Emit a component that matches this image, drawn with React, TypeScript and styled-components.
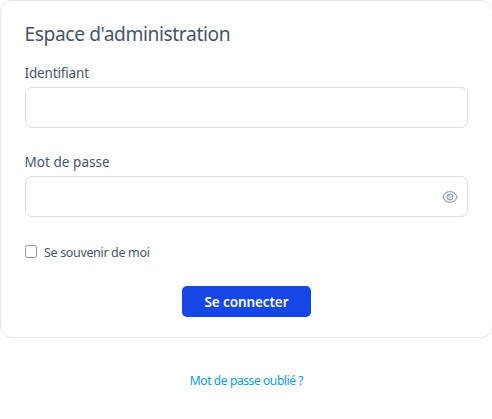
import React from "react";
import styled, { createGlobalStyle } from "styled-components";

const GlobalStyle = createGlobalStyle`
  * { box-sizing: border-box; }
  body {
    margin: 0;
    background: #fff;
    overflow: hidden;
    font-family: "Noto Sans", "Open Sans", sans-serif;
    color: #475569;
  }
`;

const Page = styled.main`
  width: 493px;
  display: flex;
  flex-direction: column;
  align-items: center;
`;

const Card = styled.form`
  width: 493px;
  height: 338px;
  padding: 18px 24px 0;
  border: 1px solid #e2e8f0;
  border-radius: 12px;
  display: flex;
  flex-direction: column;
`;

const Title = styled.h1`
  margin: 0 0 15px -0.5px;
  font-size: 19.2px;
  line-height: 30px;
  font-weight: 400;
  letter-spacing: -0.4px;
  white-space: nowrap;
`;

const Field = styled.div`
  display: flex;
  flex-direction: column;
  margin-bottom: 25px;
`;

const Label = styled.label<{ $spacing: number }>`
  height: 23px;
  margin-left: -0.5px;
  font-size: 13.5px;
  line-height: 19px;
  letter-spacing: ${(p) => p.$spacing}px;
`;

const InputBox = styled.div`
  display: flex;
  align-items: center;
  height: 41px;
  padding: 0 9px;
  border: 1px solid #dbdeea;
  border-radius: 7px;
`;

const Input = styled.input`
  flex: 1;
  min-width: 0;
  border: 0;
  outline: 0;
  background: transparent;
  font: inherit;
  color: inherit;
`;

const Toggle = styled.button`
  display: flex;
  padding: 0;
  border: 0;
  background: none;
  color: #a0abba;
`;

const Remember = styled.label`
  display: flex;
  align-items: center;
  gap: 7px;
  height: 19px;
  font-size: 12.5px;
  letter-spacing: -0.34px;
`;

const RememberText = styled.span`
  padding-top: 2px;
`;

const Checkbox = styled.input`
  appearance: none;
  width: 12px;
  height: 13px;
  margin: 0;
  border: 1px solid #8f8f9d;
  border-radius: 2.5px;
  background: #fff;
`;

const Submit = styled.button`
  align-self: center;
  width: 129px;
  height: 31px;
  margin-top: 25px;
  padding: 1px 0 0;
  border: 0;
  border-radius: 5px;
  background: #1447e6;
  color: #fff;
  font-family: inherit;
  font-size: 13.5px;
  font-weight: 600;
  letter-spacing: -0.1px;
  line-height: 30px;
`;

const Forgot = styled.a`
  margin-top: 34px;
  font-size: 12px;
  line-height: 18px;
  letter-spacing: -0.4px;
  color: #0c9bd6;
  text-decoration: none;
`;

function EyeIcon() {
  return (
    <svg width="16" height="14" viewBox="0 0 16 14" fill="none" stroke="currentColor" strokeWidth="1.3">
      <path d="M1 7C2.3 3.5 4.8 1.7 8 1.7S13.7 3.5 15 7c-1.3 3.5-3.8 5.3-7 5.3S2.3 10.500 1 7Z" />
      <circle cx="8" cy="7" r="2.8" />
      <path d="M6.800 6.800V5.500H8M7.200 8.500 9.800 5.900" strokeWidth="1" />
    </svg>
  );
}

export default function App() {
  return (
    <>
      <GlobalStyle />
      <Page>
        <Card>
          <Title>Espace d'administration</Title>
          <Field>
            <Label htmlFor="login" $spacing={-0.15}>Identifiant</Label>
            <InputBox>
              <Input id="login" type="text" />
            </InputBox>
          </Field>
          <Field>
            <Label htmlFor="password" $spacing={0.05}>Mot de passe</Label>
            <InputBox>
              <Input id="password" type="password" />
              <Toggle type="button" aria-label="Afficher le mot de passe">
                <EyeIcon />
              </Toggle>
            </InputBox>
          </Field>
          <Remember>
            <Checkbox type="checkbox" />
            <RememberText>Se souvenir de moi</RememberText>
          </Remember>
          <Submit type="button">Se connecter</Submit>
        </Card>
        <Forgot href="#">Mot de passe oublié ?</Forgot>
      </Page>
    </>
  );
}
